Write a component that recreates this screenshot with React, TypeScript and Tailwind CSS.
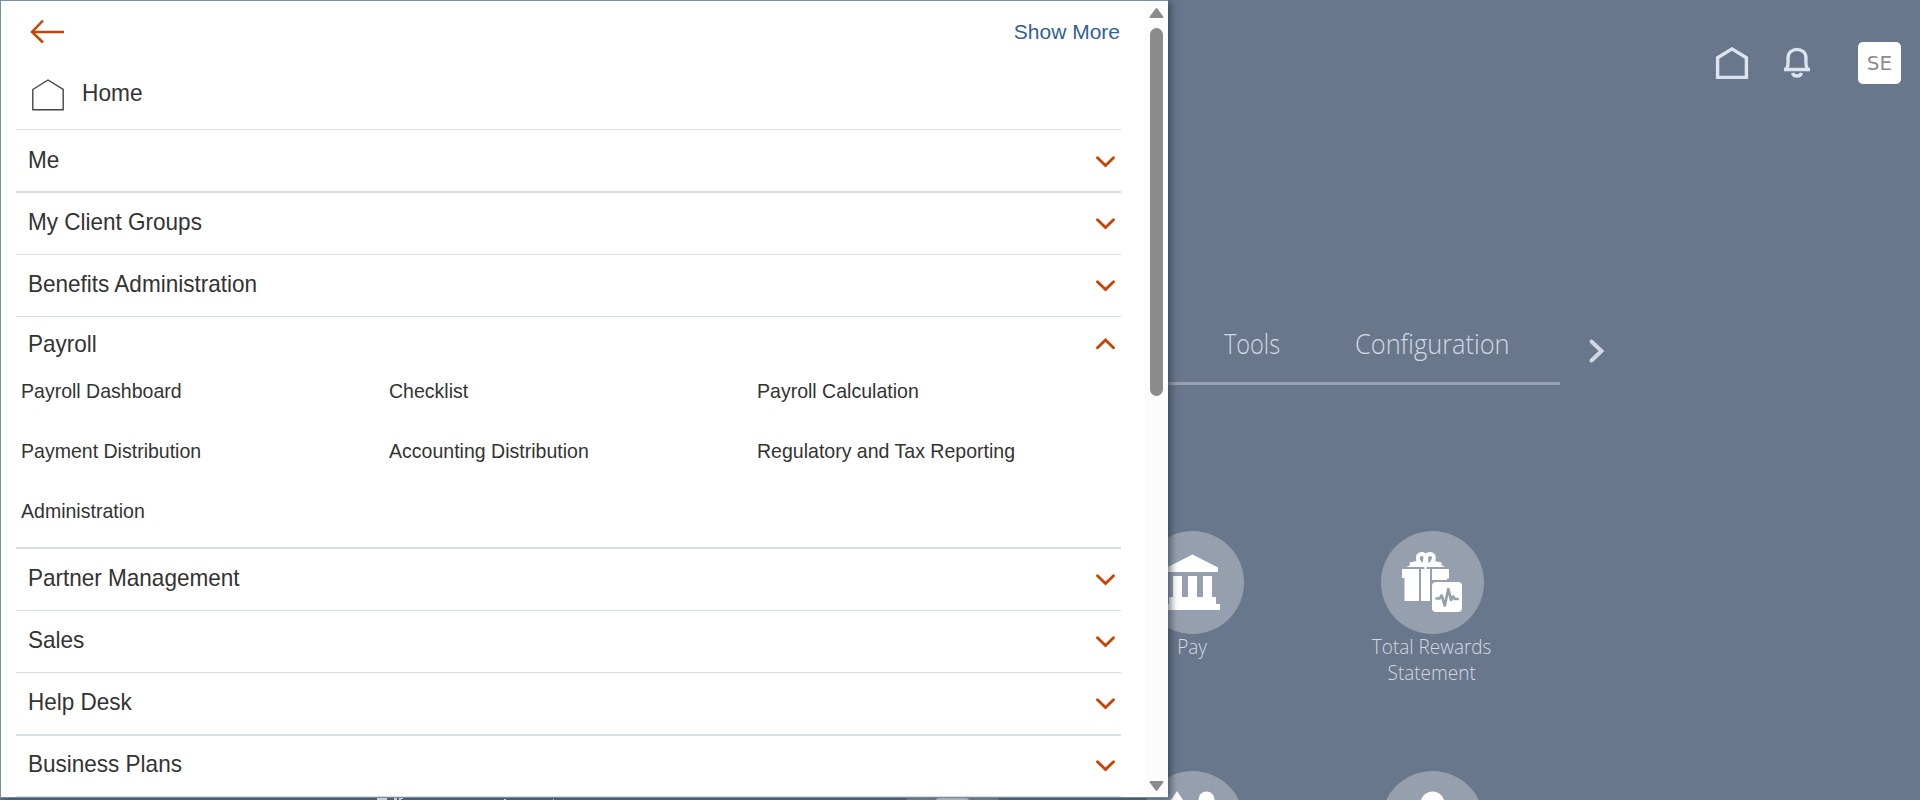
import { ReactNode } from "react";

const ARIAL = "font-['Liberation_Sans',Arial,sans-serif]";

function Chevron({ up = false }: { up?: boolean }) {
  return (
    <svg width="19" height="12" viewBox="0 0 19 12" fill="none" stroke="#c74402" strokeWidth="2.8" strokeLinecap="round">
      <path d={up ? "M1.5 9.7 L9.5 1.9 L17.5 9.7" : "M1.5 1.7 L9.5 9.5 L17.5 1.7"} />
    </svg>
  );
}

function Row({ label, className }: { label: string; className: string }) {
  return (
    <div className={`flex shrink-0 justify-between border-[#d5dde5] pl-3 pr-1.5 ${className}`}>
      <span className="inline-block origin-left scale-x-[0.938] text-[24px] leading-[28px]">{label}</span>
      <span className="mt-[10px]">
        <Chevron />
      </span>
    </div>
  );
}

function Circle({ children }: { children: ReactNode }) {
  return <div className="flex h-[103px] w-[103px] shrink-0 items-center justify-center rounded-full bg-[#969fae]">{children}</div>;
}

function Bank() {
  return (
    <svg width="103" height="103" viewBox="0 0 103 103" fill="#fff">
      <path d="M51.5 23.5 L77 36.500 V41 H26 V36.500 Z M32 45h9v22h-9z M47 45h9v22h-9z M62 45h9v22h-9z M28 66h47v7h4v6H24v-6h4z" />
    </svg>
  );
}

function Gift() {
  return (
    <svg width="103" height="103" viewBox="0 0 103 103">
      <path fill="#fff" d="M21 38h17v32H23.500V47H21z M40 38h9v32h-9z M51 38h17v9.500h-2V49H51z" />
      <g fill="none" stroke="#fff" strokeWidth="4">
        <path d="M44.500 34.500C36 34 34.500 23 40.500 23C46 23 46 30 44.500 34.500C43 30 44 23 49.500 23C55 23 54 34 44.500 34.500" />
      </g>
      <path fill="#fff" d="M25.500 36 L29 34 L28.500 31.500 L36 30 L41 33.500 H49 L54 30 L60.500 31.500 L60.500 34 L64 36 Z" />
      <rect x="51" y="51" width="30" height="30" rx="4" fill="#fff" />
      <path d="M54.500 67.500h4l2.200-3 3.100 10 3.500-16.500 2.700 11 2-3.500 1.800 2.500h4" fill="none" stroke="#969fae" strokeWidth="2.700" strokeLinejoin="round" />
    </svg>
  );
}

export default function App() {
  return (
    <div className={`relative h-[800px] w-[1920px] overflow-hidden bg-[#69778d] text-[#333] ${ARIAL}`}>
      <main className="ml-[906px] flex h-full flex-col font-['Open_Sans','Noto_Sans',sans-serif] text-[#d3d9e3]">
        <header className="flex h-[126px] shrink-0 items-center justify-end pr-[19px]">
          <svg className="mr-[34px]" width="34" height="34" viewBox="0 0 34 34" fill="none" stroke="#dde4ef" strokeWidth="3.400">
            <path d="M2.600 11.800 L17 2.900 L31.400 11.800 V31.400 H2.600 Z" />
          </svg>
          <svg className="mr-[47px]" width="28" height="32" viewBox="0 0 28 32" fill="none" stroke="#dde4ef" strokeWidth="3.300">
            <path d="M1 22.500 H27 M3.500 22 C6 18 5 15 5 11 C5 -0.500 23 -0.500 23 11 C23 15 22 18 24.500 22" />
            <path d="M9.500 26 C10.500 30 17.500 30 18.500 26" />
          </svg>
          <div className="flex h-[42px] w-[43px] items-center justify-center rounded-[5px] bg-white text-[#8c8c8c]">
            <span className="font-['DejaVu_Sans',sans-serif] text-[20px] leading-none">SE</span>
          </div>
        </header>
        <nav className="mt-[191px] flex h-[68px] shrink-0">
          <div className="flex w-[654px] border-b-[3px] border-[#97a1b1] pl-[318px] pt-[7px] text-[27px] font-light">
            <span className="w-[131px]"><span className="inline-block origin-left scale-x-[0.87]">Tools</span></span>
            <span className="inline-block origin-left scale-x-[0.94]">Configuration</span>
          </div>
          <svg className="ml-[28px] mt-[21px]" width="18" height="26" viewBox="0 0 18 26" fill="none" stroke="#d0d7e2" strokeWidth="4" strokeLinecap="round">
            <path d="M3.500 3.500 L13.500 13 L3.500 22.500" />
          </svg>
        </nav>
        <div className="mt-[146px] grid w-[720px] shrink-0 grid-cols-3 text-center text-[20.500px] font-light leading-[26px]">
          <div className="h-[240px]" />
          {[{ n: ["Pay"], i: <Bank /> }, { n: ["Total Rewards", "Statement"], i: <Gift /> }].map((t) => (
            <div key={t.n[0]} className="flex h-[240px] -translate-x-[74px] flex-col items-center">
              <Circle>{t.i}</Circle>
              <div className="-mt-px flex flex-col">
                {t.n.map((l) => <span key={l} className="scale-x-[0.925]">{l}</span>)}
              </div>
            </div>
          ))}
          {[0, 1, 2].map((k) => (
            <div key={k} className="flex -translate-x-[74px] justify-center">
              <Circle>
                <svg width="103" height="103" viewBox="0 0 103 103" fill="#fff">
                  {k === 1 ? <path d="M36 20 L48 38 H24 Z M65.500 20.500 a8 8 0 1 1 0 16 a8 8 0 1 1 0-16" /> : k === 0 ? <rect x="35" y="27" width="33" height="30" rx="3" /> : <circle cx="51.500" cy="32.500" r="12" />}
                </svg>
              </Circle>
            </div>
          ))}
        </div>
      </main>

      <aside className="absolute left-0 top-0 flex h-[798px] w-[1168px] border-b border-l border-t border-[#768da6] bg-white shadow-[3px_2px_7px_rgba(35,50,68,0.65)]">
        <div className="flex w-[1120px] flex-col overflow-hidden pl-[15px]">
          <div className="flex h-[62px] shrink-0 justify-between pl-[14px]">
            <svg className="mt-[18px]" width="35" height="25" viewBox="0 0 35 25" fill="none" stroke="#c74402" strokeWidth="2.500">
              <path d="M34 13 H2 M13 1.500 L2 13 L13 23.500" />
            </svg>
            <a className="mr-px mt-[18px] text-[21px] leading-[25px] text-[#315f9b]">Show More</a>
          </div>
          <div className="flex h-[67px] shrink-0 border-b border-[#d5dde5] pl-4">
            <svg className="mt-[15px]" width="32" height="34" viewBox="0 0 32 34" fill="none" stroke="#444" strokeWidth="1.400">
              <path d="M.8 11.500 L16 2 L31.200 11.500 V31.800 H.8 Z" />
            </svg>
            <span className="ml-[18px] mt-[16px] inline-block origin-left scale-x-[0.945] text-[24px] leading-[28px]">Home</span>
          </div>
          <Row label="Me" className="h-[63px] border-b-2 pt-[16px]" />
          <Row label="My Client Groups" className="h-[62px] border-b pt-[15px]" />
          <Row label="Benefits Administration" className="h-[62px] border-b pt-[15px]" />
          <section className="h-[232px] shrink-0 border-b-2 border-[#d5dde5]">
            <div className="flex justify-between pl-3 pr-1.5">
              <span className="mt-[13px] inline-block origin-left scale-x-[0.938] text-[24px] leading-[28px]">Payroll</span>
              <span className="mt-[21px]"><Chevron up /></span>
            </div>
            <div className="mt-[3px] grid grid-cols-[368px_368px_368px] pl-[4.500px] text-[21px] leading-[60px]">
              {["Payroll Dashboard", "Checklist", "Payroll Calculation", "Payment Distribution", "Accounting Distribution", "Regulatory and Tax Reporting", "Administration"].map((t) => (
                <span key={t} className="inline-block origin-left scale-x-[0.93] whitespace-nowrap">{t}</span>
              ))}
            </div>
          </section>
          <Row label="Partner Management" className="h-[62px] border-b pt-[15px]" />
          <Row label="Sales" className="h-[62px] border-b pt-[15px]" />
          <Row label="Help Desk" className="h-[63px] border-b-2 pt-[15px]" />
          <Row label="Business Plans" className="h-[61px] border-b pt-[14px]" />
        </div>
        <div className="ml-auto flex w-[23px] flex-col items-center bg-[#fcfcfc] pt-[6px]">
          <svg width="15" height="12" viewBox="0 0 15 12" fill="#8b8b8b" stroke="#8b8b8b" strokeWidth="2" strokeLinejoin="round"><path d="M7.500 2 L13.500 10 H1.500 Z" /></svg>
          <div className="mt-[9px] h-[368px] w-[13px] rounded-full bg-[#8b8b8b]" />
          <svg className="mt-auto mb-[5px]" width="15" height="12" viewBox="0 0 15 12" fill="#8b8b8b" stroke="#8b8b8b" strokeWidth="2" strokeLinejoin="round"><path d="M7.500 10 L13.500 2 H1.500 Z" /></svg>
        </div>
      </aside>
      <svg className="absolute bottom-0 left-[376px]" width="190" height="2" viewBox="0 0 190 2" fill="#c9ced3">
        <path d="M1 0h10v2H1z M18 0h3v2h-3z M23 0h4v1h-2v1h-2z M128 1h2v1h-2z M177 1h1v1h-1z" />
      </svg>
    </div>
  );
}
